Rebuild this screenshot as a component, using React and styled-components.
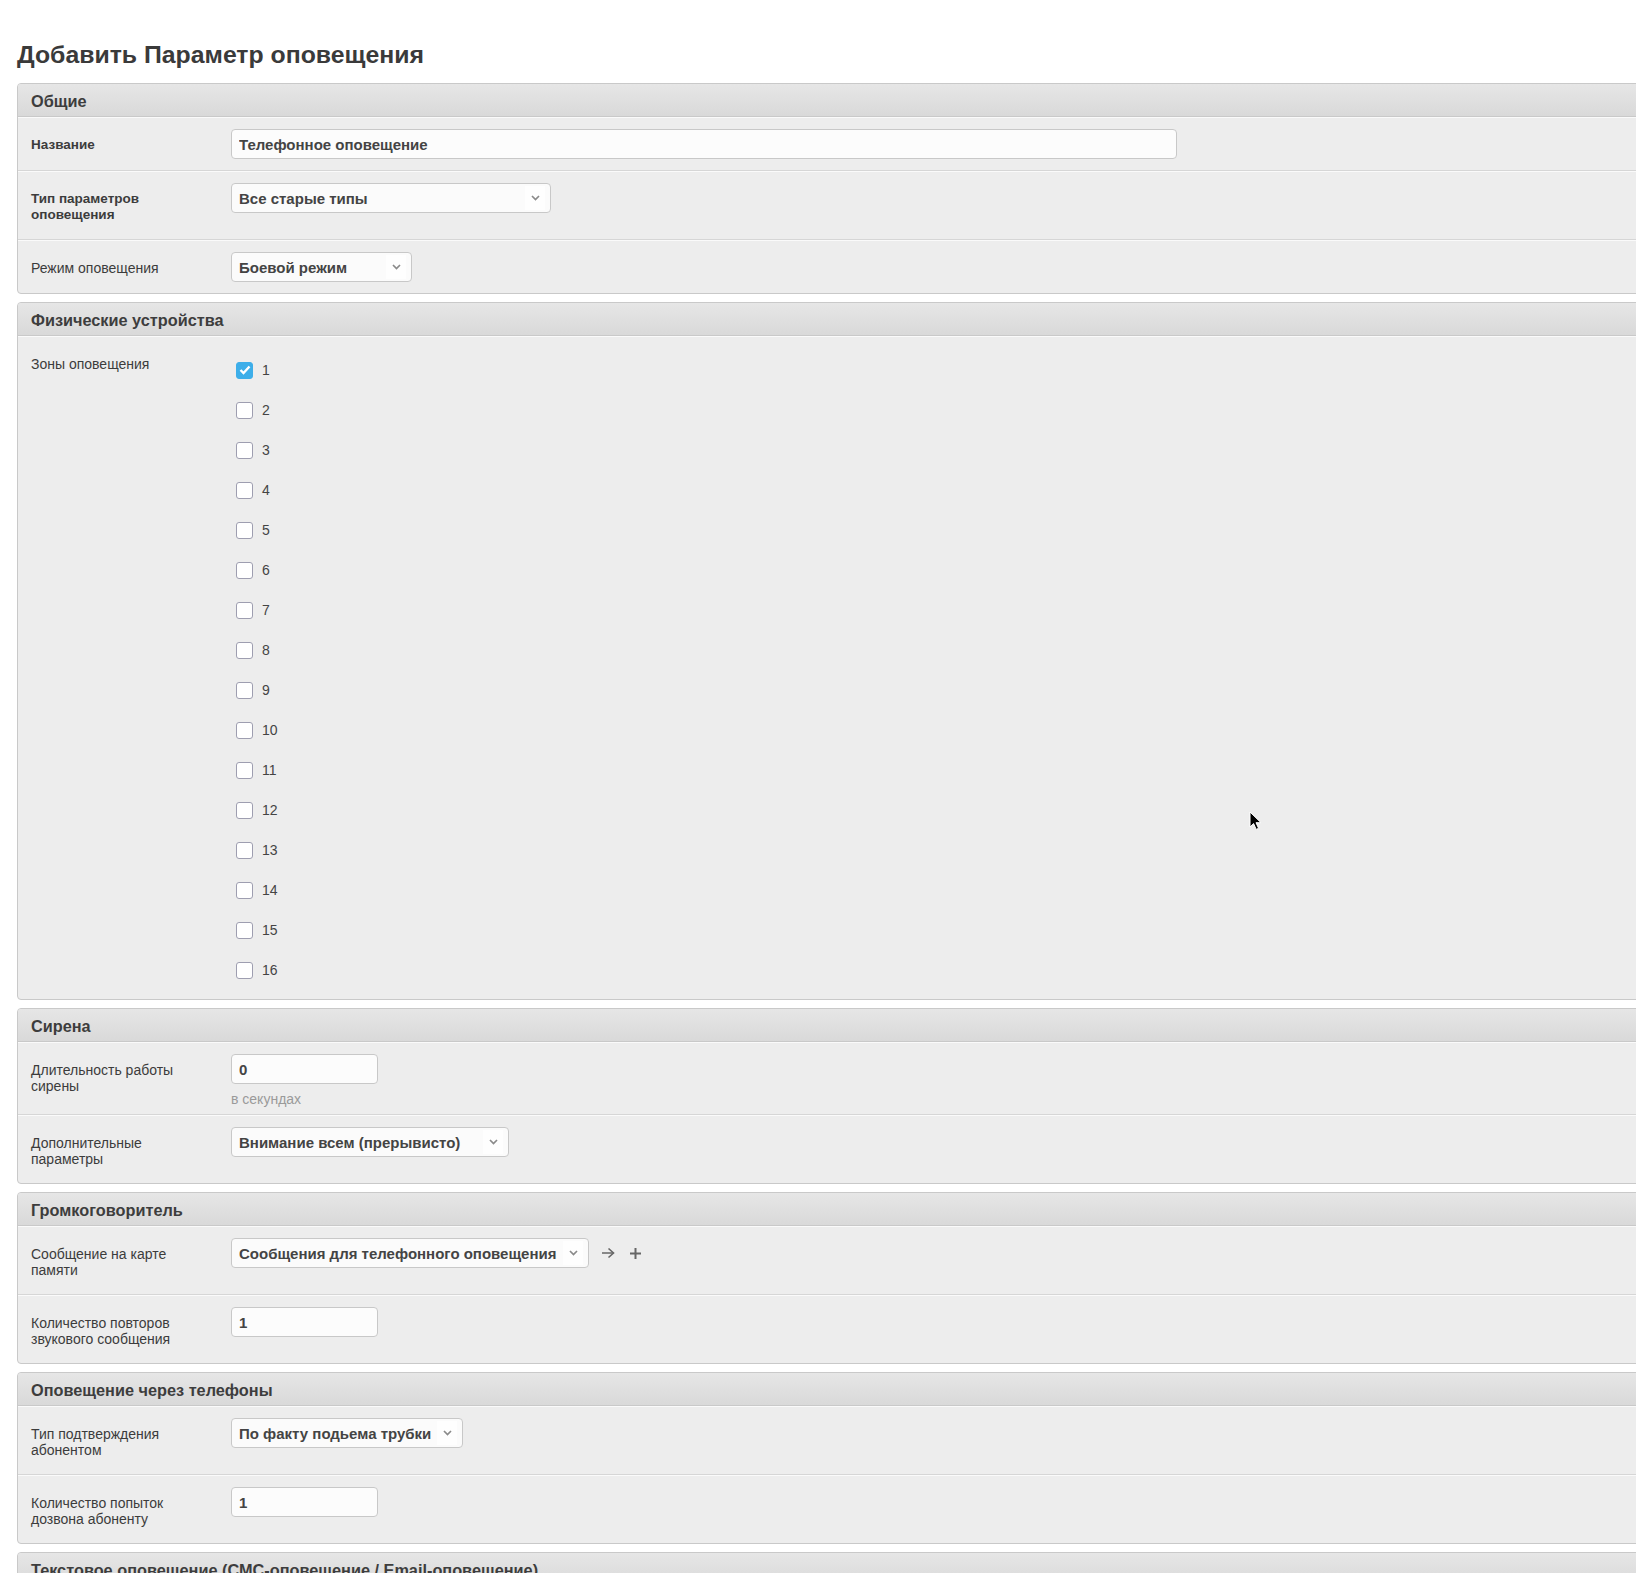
import React from "react";
import styled, { createGlobalStyle } from "styled-components";

const GlobalStyle = createGlobalStyle`
  html, body {
    margin: 0;
    padding: 0;
    overflow: hidden;
    background: #ffffff;
  }
  body {
    font-family: "Liberation Sans", Arial, Helvetica, sans-serif;
    color: #3c3c3c;
    font-size: 14px;
  }
  * { box-sizing: border-box; }
`;

const Page = styled.div`
  position: relative;
  width: 1720px;
  padding: 41px 0 0 17px;
`;

const Title = styled.h1`
  margin: 0 0 14px;
  font-size: 24.8px;
  line-height: 28px;
  font-weight: bold;
  color: #3a3a3a;
`;

const Panel = styled.section`
  border: 1px solid #c9c9c9;
  border-radius: 4px;
  background: #ededed;
  margin-bottom: 8px;
  overflow: hidden;
`;

const PanelHeader = styled.h2`
  margin: 0;
  height: 33px;
  padding: 1px 13px 0;
  line-height: 32px;
  font-size: 16.3px;
  font-weight: bold;
  color: #3d3d3d;
  background: linear-gradient(#e6e6e6, #d9d9d9);
  border-bottom: 1px solid #c9c9c9;
  white-space: nowrap;
`;

const Row = styled.div`
  display: grid;
  grid-template-columns: 213px 1fr;
  align-items: start;
  padding: 11px 0;
  border-top: 1px solid #fafafa;
  border-bottom: 1px solid #d6d6d6;
  &:last-child {
    border-bottom: none;
  }
`;

const Label = styled.div`
  padding: 8px 40px 5px 13px;
  line-height: 16px;
  font-size: ${(p) => (p.$strong ? "13.5px" : "14px")};
  font-weight: ${(p) => (p.$strong ? "bold" : "normal")};
  color: #3c3c3c;
`;

const Field = styled.div`
  display: flex;
  flex-direction: column;
  align-items: flex-start;
`;

const Inline = styled.div`
  display: flex;
  align-items: center;
  height: 30px;
`;

const TextInput = styled.input`
  width: ${(p) => p.$w}px;
  height: 30px;
  padding: 0 7px;
  border: 1px solid #c8c8c8;
  border-radius: 4px;
  background: #fcfcfc;
  font-family: inherit;
  font-size: 15px;
  font-weight: bold;
  color: #444;
  outline: none;
`;

const Help = styled.div`
  margin: 7px 0 -4px;
  line-height: 16px;
  font-size: 14px;
  color: #9a9a9a;
`;

const SelectBox = styled.div`
  display: flex;
  align-items: center;
  width: ${(p) => p.$w}px;
  height: 30px;
  padding: 0 5px 0 7px;
  border: 1px solid #c8c8c8;
  border-radius: 4px;
  background: #fbfbfb;
  font-size: 15px;
  font-weight: bold;
  color: #444;
  cursor: pointer;
`;

const SelectValue = styled.span`
  flex: 1;
  white-space: nowrap;
  overflow: hidden;
`;

const Caret = styled.span`
  display: flex;
  align-items: center;
  justify-content: center;
  width: 20px;
  height: 24px;
  background: #fefefe;
`;

const IconButton = styled.button`
  display: flex;
  align-items: center;
  justify-content: center;
  padding: 0;
  margin-left: ${(p) => p.$gap}px;
  border: none;
  background: none;
  color: #666;
  cursor: pointer;
`;

const CheckList = styled.div`
  display: flex;
  flex-direction: column;
  margin: 2px 0 -2px;
`;

const CheckItem = styled.label`
  display: flex;
  align-items: center;
  gap: 9px;
  height: 40px;
  padding-left: 5px;
  font-size: 14px;
  color: #444;
  cursor: pointer;
`;

const Box = styled.span`
  display: flex;
  align-items: center;
  justify-content: center;
  width: 17px;
  height: 17px;
  border-radius: 3px;
  border: 1px solid ${(p) => (p.$checked ? "#3daee9" : "#9e9eb0")};
  background: ${(p) => (p.$checked ? "#3daee9" : "#ffffff")};
`;

const Cursor = styled.svg`
  position: absolute;
  left: 1249px;
  top: 811px;
  pointer-events: none;
`;

const Chevron = () => (
  <svg width="9" height="6" viewBox="0 0 9 6">
    <polyline points="1,1 4.5,4.5 8,1" fill="none" stroke="#8a8a8a" strokeWidth="1.7" />
  </svg>
);

const Select = ({ w, children }) => (
  <SelectBox $w={w}>
    <SelectValue>{children}</SelectValue>
    <Caret>
      <Chevron />
    </Caret>
  </SelectBox>
);

const Check = ({ checked, n }) => (
  <CheckItem>
    <Box $checked={checked}>
      {checked && (
        <svg width="12" height="10" viewBox="0 0 12 10">
          <polyline points="1.5,5 4.5,8 10.5,1.5" fill="none" stroke="#fff" strokeWidth="2.4" />
        </svg>
      )}
    </Box>
    {n}
  </CheckItem>
);

const zones = Array.from({ length: 16 }, (_, i) => i + 1);

export default function App() {
  return (
    <>
      <GlobalStyle />
      <Page>
        <Title>Добавить Параметр оповещения</Title>

        <Panel>
          <PanelHeader>Общие</PanelHeader>
          <Row>
            <Label $strong>Название</Label>
            <Field>
              <TextInput $w={946} defaultValue="Телефонное оповещение" />
            </Field>
          </Row>
          <Row>
            <Label $strong>Тип параметров оповещения</Label>
            <Field>
              <Select w={320}>Все старые типы</Select>
            </Field>
          </Row>
          <Row>
            <Label>Режим оповещения</Label>
            <Field>
              <Select w={181}>Боевой режим</Select>
            </Field>
          </Row>
        </Panel>

        <Panel>
          <PanelHeader>Физические устройства</PanelHeader>
          <Row>
            <Label>Зоны оповещения</Label>
            <CheckList>
              {zones.map((n) => (
                <Check key={n} n={n} checked={n === 1} />
              ))}
            </CheckList>
          </Row>
        </Panel>

        <Panel>
          <PanelHeader>Сирена</PanelHeader>
          <Row>
            <Label>Длительность работы сирены</Label>
            <Field>
              <TextInput $w={147} defaultValue="0" />
              <Help>в секундах</Help>
            </Field>
          </Row>
          <Row>
            <Label>Дополнительные параметры</Label>
            <Field>
              <Select w={278}>Внимание всем (прерывисто)</Select>
            </Field>
          </Row>
        </Panel>

        <Panel>
          <PanelHeader>Громкоговоритель</PanelHeader>
          <Row>
            <Label>Сообщение на карте памяти</Label>
            <Inline>
              <Select w={358}>Сообщения для телефонного оповещения</Select>
              <IconButton $gap={12} aria-label="Перейти">
                <svg width="14" height="12" viewBox="0 0 14 12">
                  <line x1="1" y1="6" x2="12.5" y2="6" stroke="#666" strokeWidth="1.6" />
                  <polyline points="7.5,1.5 12.5,6 7.5,10.5" fill="none" stroke="#666" strokeWidth="1.6" />
                </svg>
              </IconButton>
              <IconButton $gap={14} aria-label="Добавить">
                <svg width="13" height="13" viewBox="0 0 13 13">
                  <line x1="6.5" y1="1" x2="6.5" y2="12" stroke="#666" strokeWidth="2" />
                  <line x1="1" y1="6.5" x2="12" y2="6.5" stroke="#666" strokeWidth="2" />
                </svg>
              </IconButton>
            </Inline>
          </Row>
          <Row>
            <Label>Количество повторов звукового сообщения</Label>
            <Field>
              <TextInput $w={147} defaultValue="1" />
            </Field>
          </Row>
        </Panel>

        <Panel>
          <PanelHeader>Оповещение через телефоны</PanelHeader>
          <Row>
            <Label>Тип подтверждения абонентом</Label>
            <Field>
              <Select w={232}>По факту подьема трубки</Select>
            </Field>
          </Row>
          <Row>
            <Label>Количество попыток дозвона абоненту</Label>
            <Field>
              <TextInput $w={147} defaultValue="1" />
            </Field>
          </Row>
        </Panel>

        <Panel>
          <PanelHeader>Текстовое оповещение (СМС-оповещение / Email-оповещение)</PanelHeader>
          <Row>
            <Label>Тип оповещения</Label>
            <Field>
              <Select w={232}>СМС-оповещение</Select>
            </Field>
          </Row>
        </Panel>

        <Cursor width="13" height="20" viewBox="0 0 13 20">
          <path
            d="M1 1 L1 16 L4.6 12.6 L7.2 18.4 L9.6 17.3 L7 11.7 L12 11.7 Z"
            fill="#000"
            stroke="#fff"
            strokeWidth="1"
            strokeLinejoin="round"
          />
        </Cursor>
      </Page>
    </>
  );
}
